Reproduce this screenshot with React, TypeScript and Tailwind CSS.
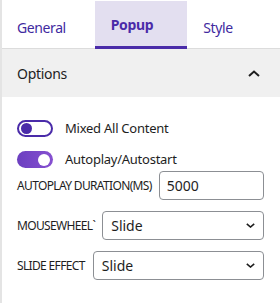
import React from "react";

const Chevron = ({ up }: { up?: boolean }) => (
  <svg width="12" height="7" viewBox="0 0 12 7" fill="none">
    {up ? (
      <path d="M1 6L6 1.5L11 6" stroke="#1e1e1e" strokeWidth="2" />
    ) : (
      <path d="M1 1L6 5.5L11 1" stroke="#1e1e1e" strokeWidth="2" />
    )}
  </svg>
);

const SmallDown = () => (
  <svg width="9" height="5" viewBox="0 0 9 5" fill="none">
    <path d="M0.8 0.8L4.5 4L8.2 0.8" stroke="#1e1e1e" strokeWidth="1.6" />
  </svg>
);

export default function App() {
  return (
    <div className="w-[280px] h-[303px] bg-white border-l-2 border-[#e4e4e4] font-['Noto_Sans',sans-serif] text-[#1e1e1e] overflow-hidden">
      <div className="grid grid-cols-3 pt-px h-[49px]">
        <div className="h-[48px] border-b border-[#dcdcdc] pl-[15px] pt-[5px] flex items-center text-[14px] tracking-[-0.4px] text-[#3f2a9f]">
          General
        </div>
        <div className="h-[48px] bg-[#e3dff0] border-b-[3px] border-[#4a2ba9] pl-[16px] flex items-center pt-[1px] text-[14px] tracking-[-0.3px] font-bold text-[#4a2ba9]">
          Popup
        </div>
        <div className="h-[48px] border-b border-[#dcdcdc] pl-[16px] pt-[5px] flex items-center text-[14px] tracking-[-0.4px] text-[#3f2a9f]">
          Style
        </div>
      </div>
      <div className="h-[48px] bg-[#f0f0f0] flex items-center justify-between pl-[15px] pr-[20px] text-[14px] tracking-[-0.3px]">
        <span>Options</span>
        <Chevron up />
      </div>
      <div className="pl-[15px] pr-[16px] pt-[23px]">
        <div className="flex items-center gap-[12px] h-[17px]">
          <div className="w-[36px] h-[17px] rounded-full border-2 border-[#4a2ba9] bg-white flex items-center pl-[2px]">
            <div className="w-[11px] h-[11px] rounded-full bg-[#4a2ba9]" />
          </div>
          <span className="text-[13px] tracking-[-0.25px]">Mixed All Content</span>
        </div>
        <div className="flex items-center gap-[12px] h-[17px] mt-[14px]">
          <div className="w-[36px] h-[17px] rounded-full bg-gradient-to-r from-[#6c3fc0] to-[#8650d0] flex items-center justify-end pr-[3px]">
            <div className="w-[12px] h-[12px] rounded-full bg-white" />
          </div>
          <span className="text-[13px] tracking-[-0.25px]">Autoplay/Autostart</span>
        </div>
        <div className="flex items-center gap-[7px] mt-[3px]">
          <span className="text-[12px] tracking-[-0.65px] whitespace-nowrap">AUTOPLAY DURATION(MS)</span>
          <div className="flex-1 h-[29px] border border-[#8c8f94] rounded-[4px] flex items-center pl-[7px] text-[14px]">
            5000
          </div>
        </div>
        <div className="flex items-center gap-[7px] mt-[11px]">
          <span className="text-[12px] tracking-[-0.65px] whitespace-nowrap">MOUSEWHEEL`</span>
          <div className="flex-1 h-[29px] border border-[#8c8f94] rounded-[4px] flex items-center justify-between pl-[8px] pr-[8px] text-[14px]">
            <span>Slide</span>
            <SmallDown />
          </div>
        </div>
        <div className="flex items-center gap-[8px] mt-[11px]">
          <span className="text-[12px] tracking-[-0.65px] whitespace-nowrap">SLIDE EFFECT</span>
          <div className="flex-1 h-[29px] border border-[#8c8f94] rounded-[4px] flex items-center justify-between pl-[8px] pr-[8px] text-[14px]">
            <span>Slide</span>
            <SmallDown />
          </div>
        </div>
      </div>
    </div>
  );
}
